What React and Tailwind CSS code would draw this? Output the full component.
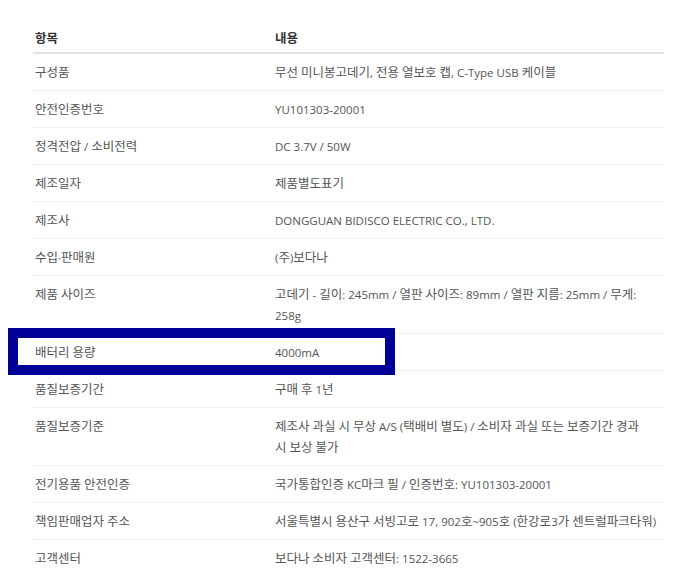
import React from "react";

const rows = [
  ["구성품", "무선 미니봉고데기, 전용 열보호 캡, C-Type USB 케이블"],
  ["안전인증번호", "YU101303-20001"],
  ["정격전압 / 소비전력", "DC 3.7V / 50W"],
  ["제조일자", "제품별도표기"],
  ["제조사", "DONGGUAN BIDISCO ELECTRIC CO., LTD."],
  ["수입·판매원", "(주)보다나"],
  ["제품 사이즈", ["고데기 - 길이: 245mm / 열판 사이즈: 89mm / 열판 지름: 25mm / 무게:", "258g"]],
  ["배터리 용량", "4000mA"],
  ["품질보증기간", "구매 후 1년"],
  ["품질보증기준", ["제조사 과실 시 무상 A/S (택배비 별도) / 소비자 과실 또는 보증기간 경과", "시 보상 불가"]],
  ["전기용품 안전인증", "국가통합인증 KC마크 필 / 인증번호: YU101303-20001"],
  ["책임판매업자 주소", "서울특별시 용산구 서빙고로 17, 902호~905호 (한강로3가 센트럴파크타워)"],
  ["고객센터", "보다나 소비자 고객센터: 1522-3665"],
];

const HANGUL = /[\u1100-\u11FF\u3130-\u318F\uAC00-\uD7A3]/;

function Mixed({ text }) {
  const parts = text.split(/([\u1100-\u11FF\u3130-\u318F\uAC00-\uD7A3]+)/).filter(Boolean);
  return parts.map((p, i) =>
    HANGUL.test(p) ? (
      <span key={i} className="leading-none">
        {p}
      </span>
    ) : (
      <span key={i} className="leading-none font-['Open_Sans','Noto_Sans_CJK_KR',sans-serif] text-[11.5px]">
        {p}
      </span>
    )
  );
}

function Value({ v }) {
  if (Array.isArray(v)) {
    return v.map((line, i) => (
      <div key={i} className="whitespace-nowrap">
        <Mixed text={line} />
      </div>
    ));
  }
  return <Mixed text={v} />;
}

export default function App() {
  return (
    <div className="relative w-[691px] h-[574px] overflow-hidden bg-white text-[12.5px] font-['Noto_Sans_CJK_KR',sans-serif]">
      <div className="ml-[33px] mt-[20px] w-[631px]">
        <div className="grid grid-cols-[240px_1fr] pt-[7px] pb-[4px] leading-[21px] border-b-2 border-[#e2e2e2] font-bold text-[#333]">
          <div className="pl-[2px]">항목</div>
          <div className="pl-[2px]">내용</div>
        </div>
        {rows.map(([k, v]) => (
          <div
            key={k}
            className="grid grid-cols-[240px_1fr] pt-[7px] pb-[8px] leading-[21px] border-b border-[#f0f0f0] text-[#555]"
          >
            <div className="pl-[2px]">
              <Mixed text={k} />
            </div>
            <div className="pl-[2px]">
              <Value v={v} />
            </div>
          </div>
        ))}
      </div>
      <div className="absolute left-[8px] top-[328px] w-[387px] h-[47px] border-[10px] border-[#000096]" />
    </div>
  );
}
